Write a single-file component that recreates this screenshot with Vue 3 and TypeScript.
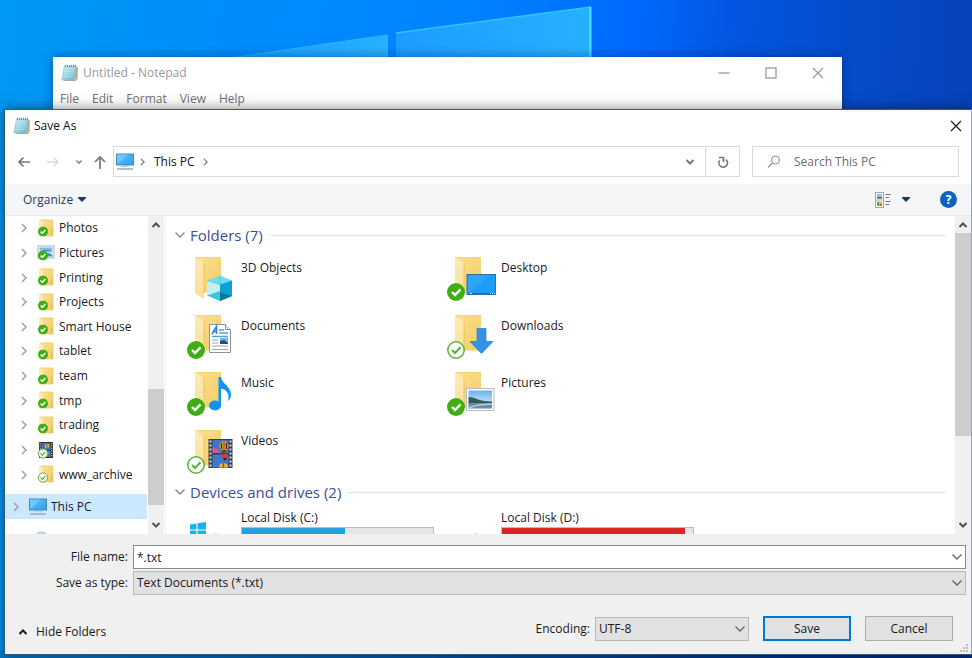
<script setup lang="ts">
import { ref } from 'vue'

interface TreeItem {
  name: string
  icon: string
}

interface Folder {
  name: string
  overlay: string
  badge: string
}

interface Drive {
  name: string
  used: number
  full: boolean
  system: boolean
}

const menus: string[] = ['File', 'Edit', 'Format', 'View', 'Help']

const tree: TreeItem[] = [
  { name: 'Photos', icon: 's-folder' },
  { name: 'Pictures', icon: 's-pictures' },
  { name: 'Printing', icon: 's-folder' },
  { name: 'Projects', icon: 's-folder' },
  { name: 'Smart House', icon: 's-folder' },
  { name: 'tablet', icon: 's-folder' },
  { name: 'team', icon: 's-folder' },
  { name: 'tmp', icon: 's-folder' },
  { name: 'trading', icon: 's-folder' },
  { name: 'Videos', icon: 's-videos' },
  { name: 'www_archive', icon: 's-folder-open' },
]

const folders: Folder[] = [
  { name: '3D Objects', overlay: 'o-cube', badge: '' },
  { name: 'Desktop', overlay: 'o-desktop', badge: 'b-solid' },
  { name: 'Documents', overlay: 'o-document', badge: 'b-solid' },
  { name: 'Downloads', overlay: 'o-download', badge: 'b-ring' },
  { name: 'Music', overlay: 'o-music', badge: 'b-solid' },
  { name: 'Pictures', overlay: 'o-picture', badge: 'b-solid' },
  { name: 'Videos', overlay: 'o-video', badge: 'b-ring' },
]

const drives: Drive[] = [
  { name: 'Local Disk (C:)', used: 54, full: false, system: true },
  { name: 'Local Disk (D:)', used: 96, full: true, system: false },
]

const fileName = ref('*.txt')
const fileType = ref('Text Documents (*.txt)')
const encoding = ref('UTF-8')
const search = ref('')
</script>

<template>
  <div class="desktop">
    <svg class="symbols" aria-hidden="true">
      <defs>
        <linearGradient id="g-folder" x1="0" y1="0" x2="1" y2="1">
          <stop offset="0" stop-color="#ffe08a" />
          <stop offset="1" stop-color="#f0cd6c" />
        </linearGradient>
        <linearGradient id="g-flap" x1="0" y1="0" x2="0" y2="1">
          <stop offset="0" stop-color="#fdeab5" />
          <stop offset="1" stop-color="#fbdf93" />
        </linearGradient>
        <linearGradient id="g-screen" x1="0" y1="0" x2="1" y2="1">
          <stop offset="0" stop-color="#63c4ff" />
          <stop offset="1" stop-color="#2a9ff2" />
        </linearGradient>
        <linearGradient id="g-pad" x1="0" y1="0" x2="1" y2="1">
          <stop offset="0" stop-color="#d3eff5" />
          <stop offset="1" stop-color="#62b8cd" />
        </linearGradient>
        <linearGradient id="g-sky" x1="0" y1="0" x2="0" y2="1">
          <stop offset="0" stop-color="#6fb0ee" />
          <stop offset="1" stop-color="#e9f5fb" />
        </linearGradient>
      </defs>

      <symbol id="notepad" viewBox="0 0 17 18">
        <path d="M14 2 L16.500 3 V15 Q16 17 14 17 H3 L2 16 Z" fill="#d9cfae" />
        <path d="M14 15 L16 3.500 V15 L14 16.500 H4" fill="none" stroke="#9f957a" stroke-width=".8" />
        <path d="M3.500 2 H15 L13 16 H.8 Z" fill="url(#g-pad)" stroke="#8bb8c2" stroke-width=".6" />
        <path d="M4 5 H13.500 M3.500 7.500 H13 M3 10 H12.500 M2.500 12.500 H12" stroke="#f0fbfd" stroke-width=".5" opacity=".5" />
        <path d="M4.500 .8V3 M6.500 .8V3 M8.500 .8V3 M10.500 .8V3 M12.500 .8V3 M14.500 .8V3" stroke="#6d7f86" stroke-width=".8" />
      </symbol>

      <symbol id="pc" viewBox="0 0 18 17">
        <rect x=".5" y="1" width="17" height="11" fill="url(#g-screen)" stroke="#407ea8" stroke-width=".9" />
        <path d="M1 11.500 L12 1.500 H1 Z" fill="#8fd6ff" opacity=".45" />
        <path d="M8 12.500 H10 V14 H8 Z" fill="#a2aeb8" />
        <path d="M5 13.500 H13" stroke="#c2cbd2" stroke-width="1" />
        <path d="M1 16 H17" stroke="#9daab6" stroke-width="1.500" />
      </symbol>

      <symbol id="s-badge" viewBox="0 0 10 10">
        <circle cx="5" cy="5" r="5" fill="#3fae15" />
        <path d="M2.600 5.100 L4.400 6.800 L7.400 3.500" fill="none" stroke="#fff" stroke-width="1.500" />
      </symbol>
      <symbol id="s-base" viewBox="0 0 18 19">
        <path d="M3 1 H16 V17 H3 Z" fill="url(#g-folder)" stroke="#edcd69" stroke-width=".8" />
        <path d="M13.500 11 L16 10 V17 H13.500 Z" fill="#e9c35c" />
        <path d="M3 1 L6 3 V17 H3 Z" fill="#fcebb2" />
      </symbol>
      <symbol id="s-folder" viewBox="0 0 18 19">
        <use href="#s-base" width="18" height="19" />
        <use href="#s-badge" x="1" y="7.500" width="10" height="10" />
      </symbol>
      <symbol id="s-folder-open" viewBox="0 0 18 19">
        <use href="#s-base" width="18" height="19" />
        <circle cx="6" cy="12.500" r="4.600" fill="#fff" stroke="#5cb53b" stroke-width="1" />
        <path d="M3.500 12.500 L5.500 14.400 L8.500 10.800" fill="none" stroke="#5cb53b" stroke-width="1.300" />
      </symbol>
      <symbol id="s-pictures" viewBox="0 0 18 19">
        <rect x="1" y="3" width="16" height="12" fill="#fff" stroke="#aab3bb" />
        <rect x="2.500" y="4.500" width="13" height="9" fill="url(#g-sky)" />
        <path d="M6 7.500 H14" stroke="#3a87dd" stroke-width="1.300" />
        <path d="M7 13.500 V11 L11 10 L15.500 12 V13.500 Z" fill="#5587a4" />
        <use href="#s-badge" x="1" y="7.500" width="10" height="10" />
      </symbol>
      <symbol id="s-videos" viewBox="0 0 18 19">
        <rect x="2" y="1" width="14" height="16" fill="#30343a" />
        <rect x="4.500" y="2" width="9" height="7" fill="#406ebc" />
        <rect x="4.500" y="9.800" width="9" height="6.200" fill="#4d86cf" />
        <circle cx="10" cy="5" r="2.300" fill="#e3b62f" />
        <path d="M10 3V8" stroke="#b04324" />
        <path d="M10 11 L13 16 H8 Z" fill="#73652f" />
        <path d="M3.200 2V16 M14.800 2V16" stroke="#d7dce2" stroke-width="1" stroke-dasharray="1.200 1.200" />
        <circle cx="6" cy="12.500" r="4.600" fill="#fff" stroke="#5cb53b" stroke-width="1" />
        <path d="M3.500 12.500 L5.500 14.400 L8.500 10.800" fill="none" stroke="#5cb53b" stroke-width="1.300" />
      </symbol>

      <symbol id="folder" viewBox="0 0 50 46">
        <path d="M8 1 H34 V36.500 H8 Z" fill="url(#g-folder)" />
        <path d="M8 1 H34 V2 H9 Z" fill="#f4d478" />
        <path d="M8 1.500 L17 7 V43 L8 37.500 Z" fill="url(#g-flap)" />
        <path d="M17 7 V37" stroke="#e5bd5c" stroke-width=".8" />
      </symbol>
      <symbol id="b-solid" viewBox="0 0 50 46">
        <circle cx="9" cy="36" r="9" fill="#3fae15" />
        <path d="M5 36 L8 39 L13.500 33.300" fill="none" stroke="#fff" stroke-width="2.400" />
      </symbol>
      <symbol id="b-ring" viewBox="0 0 50 46">
        <circle cx="9" cy="36" r="8.200" fill="#fff" stroke="#58b336" stroke-width="1.500" />
        <path d="M5 36 L8 39 L13.500 33.300" fill="none" stroke="#58b336" stroke-width="2" />
      </symbol>
      <symbol id="o-cube" viewBox="0 0 50 46">
        <path d="M20 24.500 L33 19.500 L45 24.500 L33 28.500 Z" fill="#6fdfee" />
        <path d="M20 24.500 L33 28.500 V45 L20 39.500 Z" fill="#c4f0f5" />
        <path d="M33 28.500 L45 24.500 V40 L33 45 Z" fill="#109fd4" />
        <path d="M20 39.500 L33 35 V45 Z" fill="#3cc7d9" />
        <path d="M33 36.500 L45 40 L33 45 Z" fill="#077a96" />
        <path d="M33 20V28 M33 28.500 L20 24.500 M33 28.500 L45 24.500" stroke="#30bfdc" stroke-width=".6" />
      </symbol>
      <symbol id="o-desktop" viewBox="0 0 50 46">
        <rect x="20" y="18.500" width="28.500" height="20" fill="#1e9cf7" stroke="#2b709f" />
        <path d="M21 38 L43 19 H21 Z" fill="#43b0ff" opacity=".45" />
        <path d="M21 37.500 H48" stroke="#126fc0" />
        <path d="M23 37.500 H25 M43 37.500 H44 M45 37.500 H46 M47 37.500 H48" stroke="#c8e7ff" />
      </symbol>
      <symbol id="o-document" viewBox="0 0 50 46">
        <path d="M22.500 10.500 H38.500 L43.500 15.500 V38.500 H22.500 Z" fill="#fcfdff" stroke="#8b949c" />
        <path d="M38.500 10.500 V15.500 H43.500" fill="#e3e8eb" stroke="#8b949c" />
        <path d="M25 20 L29.500 12.500 V20 M26.500 17.500 H29.500" fill="none" stroke="#2484d2" stroke-width="1.500" />
        <path d="M32 16 H37 M32 19 H41 M25 22.500 H41" stroke="#4ba3df" stroke-width="1.300" />
        <path d="M25 26 H31 M25 29 H31 M25 32 H41 M25 35.500 H41" stroke="#9aa5ae" stroke-width="1.100" />
        <rect x="33" y="24" width="8" height="6" fill="#76b5ea" />
        <path d="M33 27 L37 26 L41 29 V30 H33 Z" fill="#24506d" />
      </symbol>
      <symbol id="o-download" viewBox="0 0 50 46">
        <path d="M30 14.500 H39 V27.500 H46 L34.500 39.500 L23 27.500 H30 Z" fill="#3393e6" stroke="#2480cf" stroke-width=".7" />
      </symbol>
      <symbol id="o-music" viewBox="0 0 50 46">
        <ellipse cx="28" cy="34.500" rx="6" ry="5" fill="#0f94f5" />
        <path d="M31.500 6 H34 C35 13 44 15 44 24 C44 27 42.500 29 41 30 C43 23 40 19 34 17.500 V35 H31.500 Z" fill="#0f94f5" />
      </symbol>
      <symbol id="o-picture" viewBox="0 0 50 46">
        <rect x="19.500" y="17.500" width="27.500" height="22" fill="#fff" stroke="#b5bbc1" />
        <rect x="21.500" y="19.500" width="23.500" height="18" fill="url(#g-sky)" />
        <path d="M21.500 26 C27 26 31 29 37 30 L45 30.500 V33 H21.500 Z" fill="#345d52" />
        <path d="M21.500 32 H45 V37.500 H21.500 Z" fill="#668cab" />
        <path d="M21.500 37.500 C27 33 36 34 45 33" fill="none" stroke="#b6cddd" stroke-width="1.500" />
      </symbol>
      <symbol id="o-video" viewBox="0 0 50 46">
        <rect x="21.500" y="10" width="24" height="29" fill="#3a3e44" />
        <rect x="25.500" y="11" width="16" height="13" fill="#4373cc" />
        <rect x="25.500" y="25.500" width="16" height="13" fill="#3f78d3" />
        <path d="M25.500 18 L30 20 L34 24 H25.500 Z" fill="#d25b8e" />
        <circle cx="37" cy="17" r="4.500" fill="#e9b526" />
        <path d="M34.500 14V20 M39.500 14V20" stroke="#353014" stroke-width="1.500" />
        <path d="M37 13V21" stroke="#d6431f" stroke-width="1.500" />
        <path d="M34.500 21 L36 24 H38 L39.500 21 Z" fill="#6d431c" />
        <circle cx="38" cy="27.500" r="3" fill="#cb3f34" />
        <path d="M36 29 L38 32 L40 29 Z" fill="#272326" />
        <path d="M32 38.500 A4.500 4.500 0 0 1 41 38.500 Z" fill="#ebbb2f" />
        <path d="M36.500 34V38.500" stroke="#a2441e" stroke-width="1.500" />
        <path d="M23.500 11.500V38.500 M43.500 11.500V38.500" stroke="#d5dae0" stroke-width="2" stroke-dasharray="2 2" />
      </symbol>
      <symbol id="down" viewBox="0 0 12 8">
        <path d="M1.500 1.500 L6 6 L10.500 1.500" fill="none" stroke="currentColor" stroke-width="1.400" />
      </symbol>
      <symbol id="down-bold" viewBox="0 0 10 8">
        <path d="M1.500 2 L5 5.500 L8.500 2" fill="none" stroke="currentColor" stroke-width="2" />
      </symbol>
      <symbol id="right" viewBox="0 0 6 10">
        <path d="M1 1 L5 5 L1 9" fill="none" stroke="currentColor" stroke-width="1.500" />
      </symbol>
      <symbol id="caret" viewBox="0 0 8 5">
        <path d="M0 0 H8 V1 L4 5 L0 1 Z" fill="currentColor" />
      </symbol>
      <symbol id="close" viewBox="0 0 12 12">
        <path d="M1 1 L11 11 M11 1 L1 11" stroke="currentColor" stroke-width="1.300" />
      </symbol>
    </svg>

    <svg class="wallpaper" viewBox="0 0 972 110" preserveAspectRatio="xMidYMin slice" aria-hidden="true">
      <defs>
        <linearGradient id="g-pane" x1="0" y1="0" x2="1" y2="0">
          <stop offset="0" stop-color="#1b9dff" />
          <stop offset="1" stop-color="#27b0ff" />
        </linearGradient>
      </defs>
      <path d="M230 58 L387 35 V60 H230 Z" fill="url(#g-pane)" />
      <path d="M230 58 L387 35" stroke="#2ab5ff" />
      <path d="M387 35 V60" stroke="#2ebcff" stroke-width="1.500" />
      <path d="M396 33 L591 7 V60 H396 Z" fill="url(#g-pane)" />
      <path d="M396 33 L591 7" stroke="#30c4ff" stroke-width="1.500" />
      <path d="M590.500 7 V60" stroke="#42e4ff" stroke-width="2" />
    </svg>

    <section class="notepad" aria-label="Untitled - Notepad">
      <header class="np-title">
        <svg class="app-icon"><use href="#notepad" /></svg>
        <span class="np-name">Untitled - Notepad</span>
        <div class="np-buttons">
          <button type="button" aria-label="Minimize">
            <svg class="i12" viewBox="0 0 12 12"><path d="M.5 6 H11.500" stroke="currentColor" stroke-width="1.300" /></svg>
          </button>
          <button type="button" aria-label="Maximize">
            <svg class="i12" viewBox="0 0 12 12"><rect x="1" y="1" width="10" height="10" fill="none" stroke="currentColor" stroke-width="1.300" /></svg>
          </button>
          <button type="button" aria-label="Close"><svg class="i12"><use href="#close" /></svg></button>
        </div>
      </header>
      <nav class="np-menu">
        <button v-for="m in menus" :key="m" type="button">{{ m }}</button>
      </nav>
    </section>

    <section class="dialog" role="dialog" aria-labelledby="dialog-title">
      <header class="title">
        <svg class="app-icon"><use href="#notepad" /></svg>
        <span id="dialog-title">Save As</span>
        <button class="close" type="button" aria-label="Close"><svg class="i12"><use href="#close" /></svg></button>
      </header>

      <div class="nav">
        <div class="history">
          <button type="button" aria-label="Back">
            <svg class="i14" viewBox="0 0 14 14"><path d="M13 7 H2 M6.500 2.500 L2 7 L6.500 11.500" fill="none" stroke="#777" stroke-width="1.700" /></svg>
          </button>
          <button type="button" aria-label="Forward">
            <svg class="i14" viewBox="0 0 14 14"><path d="M1 7 H12 M7.500 2.500 L12 7 L7.500 11.500" fill="none" stroke="#d9d9d9" stroke-width="1.500" /></svg>
          </button>
          <button type="button" aria-label="Recent locations"><svg class="recent"><use href="#down-bold" /></svg></button>
          <button type="button" aria-label="Up">
            <svg class="i14" viewBox="0 0 14 14"><path d="M7 14 V2 M2 7 L7 2 L12 7" fill="none" stroke="#777" stroke-width="1.700" /></svg>
          </button>
        </div>
        <div class="address">
          <svg class="pc"><use href="#pc" /></svg>
          <svg class="crumb"><use href="#right" /></svg>
          <a href="#this-pc">This PC</a>
          <svg class="crumb"><use href="#right" /></svg>
          <button class="drop" type="button" aria-label="Previous locations"><svg class="i10"><use href="#down-bold" /></svg></button>
          <button class="refresh" type="button" aria-label="Refresh">
            <svg class="i14" viewBox="0 0 14 14">
              <path d="M3.600 5.500 A4.300 4.300 0 1 0 10 4.600" fill="none" stroke="#777" stroke-width="1.700" />
              <path d="M3 2.500 H7.500 V7" fill="none" stroke="#777" stroke-width="1.700" />
            </svg>
          </button>
        </div>
        <label class="search">
          <svg class="i14" viewBox="0 0 14 14">
            <circle cx="8.500" cy="5" r="4" fill="none" stroke="#8c8c94" stroke-width="1" />
            <path d="M5.500 8 L1 12.500" stroke="#9b8f96" stroke-width="1.200" />
          </svg>
          <input v-model="search" type="text" placeholder="Search This PC" aria-label="Search This PC" />
        </label>
      </div>

      <div class="commands">
        <button class="organize" type="button">Organize <svg class="caret"><use href="#caret" /></svg></button>
        <button class="view" type="button" aria-label="Change your view">
          <svg class="view-icon" viewBox="0 0 16 16">
            <rect x=".5" y=".5" width="8" height="15" fill="#fff" stroke="#a5a5a5" />
            <path d="M.5 8 H8.500" stroke="#a5a5a5" />
            <rect x="2" y="2" width="5" height="4.500" fill="#8cc3f2" />
            <path d="M2 5 H7 V6.500 H2 Z" fill="#2b6d88" />
            <rect x="2" y="9.500" width="2.500" height="4.500" fill="#64a93a" />
            <rect x="4.500" y="9.500" width="2.500" height="2.500" fill="#e9b92f" />
            <rect x="4.500" y="12" width="2.500" height="2" fill="#dd5142" />
            <path d="M10.500 2.500 H15.500 M10.500 5.500 H14 M10.500 9.500 H15.500 M10.500 12.500 H14" stroke="#75777c" />
          </svg>
          <svg class="caret"><use href="#caret" /></svg>
        </button>
        <button class="help" type="button" aria-label="Help">?</button>
      </div>

      <div class="body">
        <nav class="tree" aria-label="Folder tree">
          <ul class="tree-list">
            <li v-for="item in tree" :key="item.name" class="node">
              <svg class="twist"><use href="#right" /></svg>
              <svg class="node-icon"><use :href="'#' + item.icon" /></svg>
              <span>{{ item.name }}</span>
            </li>
          </ul>
          <div class="node root">
            <svg class="twist"><use href="#right" /></svg>
            <svg class="pc"><use href="#pc" /></svg>
            <span>This PC</span>
          </div>
          <svg class="network" viewBox="0 0 18 18">
            <circle cx="11" cy="7.500" r="6" fill="#63a9c8" />
            <path d="M6 5 Q11 1 14 4 M11 1.500 V12 M7 3 Q8 5 12 7" fill="none" stroke="#cce9f2" stroke-width="1.200" />
          </svg>
        </nav>
        <div class="scroll">
          <svg class="i10 up"><use href="#down-bold" /></svg>
          <div class="track"><div class="thumb low"></div></div>
          <svg class="i10"><use href="#down-bold" /></svg>
        </div>

        <main class="files">
          <h2 class="group"><svg class="i12h"><use href="#down" /></svg>Folders (7)</h2>
          <div class="folders">
            <div v-for="f in folders" :key="f.name" class="tile">
              <svg class="tile-icon" viewBox="0 0 50 46">
                <use href="#folder" />
                <use :href="'#' + f.overlay" />
                <use v-if="f.badge" :href="'#' + f.badge" />
              </svg>
              <span>{{ f.name }}</span>
            </div>
          </div>
          <h2 class="group"><svg class="i12h"><use href="#down" /></svg>Devices and drives (2)</h2>
          <div class="drives">
            <div v-for="d in drives" :key="d.name" class="tile">
              <svg class="tile-icon" viewBox="0 0 50 46">
                <path
                  v-if="d.system"
                  d="M3 14.500 L9.500 13.500 V19.500 H3 Z M10.500 13.300 L19 12 V19.500 H10.500 Z M3 20.500 H9.500 V27 L3 26 Z M10.500 20.500 H19 V28.500 L10.500 27.300 Z"
                  fill="#17b5ec"
                />
                <path d="M26 24 L29 22.500 L31 24 Z" fill="#d9dde1" />
              </svg>
              <div class="drive-info">
                <span>{{ d.name }}</span>
                <div class="usage" :class="{ full: d.full }"><div class="used" :style="{ width: d.used + '%' }"></div></div>
              </div>
            </div>
          </div>
        </main>
        <div class="scroll">
          <svg class="i10 up"><use href="#down-bold" /></svg>
          <div class="track"><div class="thumb high"></div></div>
          <svg class="i10"><use href="#down-bold" /></svg>
        </div>
      </div>

      <form class="footer" @submit.prevent>
        <div class="fields">
          <label for="file-name">File name:</label>
          <div class="field">
            <input id="file-name" v-model="fileName" type="text" />
            <svg class="field-arrow"><use href="#down" /></svg>
          </div>
          <label for="file-type">Save as type:</label>
          <div class="field gray">
            <select id="file-type" v-model="fileType">
              <option>Text Documents (*.txt)</option>
            </select>
            <svg class="field-arrow"><use href="#down" /></svg>
          </div>
        </div>
        <div class="actions">
          <button class="hide" type="button"><svg class="i10 up"><use href="#down-bold" /></svg>Hide Folders</button>
          <label for="encoding">Encoding:</label>
          <div class="field gray encoding">
            <select id="encoding" v-model="encoding">
              <option>UTF-8</option>
            </select>
            <svg class="field-arrow"><use href="#down" /></svg>
          </div>
          <button class="push primary" type="submit">Save</button>
          <button class="push" type="button">Cancel</button>
        </div>
        <svg class="grip" viewBox="0 0 9 9" aria-hidden="true">
          <path d="M6 0h2v2h-2z M3 3h2v2h-2z M6 3h2v2h-2z M0 6h2v2h-2z M3 6h2v2h-2z M6 6h2v2h-2z" fill="#bdbdbd" />
        </svg>
      </form>
    </section>
  </div>
</template>

<style>
body {
  margin: 0;
}
</style>

<style scoped>
.desktop {
  position: relative;
  height: 100vh;
  overflow: hidden;
  background:
    linear-gradient(90deg, #0078c8 0%, #005cad 40%, #003a94 70%, #002c80 100%) bottom / 100% 8px no-repeat,
    linear-gradient(95deg, #0099f4 0%, #008cfb 25%, #0083ff 46%, #0068ff 62%, #0355de 72%, #0649c6 86%, #053fb4 100%);
  font: 12px/16px "Open Sans", "Noto Sans", sans-serif;
  color: #1a1a1a;
}
.desktop *,
.desktop *::before {
  box-sizing: border-box;
}
svg {
  display: block;
  flex: none;
}
.symbols {
  position: absolute;
  width: 0;
  height: 0;
}
.wallpaper {
  position: absolute;
  top: 0;
  left: 0;
  width: 100%;
  height: 110px;
}
button {
  padding: 0;
  border: 0;
  background: none;
  font: inherit;
  color: inherit;
}
input,
select {
  min-width: 0;
  border: 0;
  outline: 0;
  margin: 0;
  background: none;
  font: inherit;
  color: inherit;
}
.i10 { width: 10px; height: 8px; }
.i12 { width: 12px; height: 12px; }
.i12h { width: 12px; height: 8px; color: #888; }
.i14 { width: 14px; height: 14px; }
.up { transform: scaleY(-1); }
.app-icon { width: 17px; height: 18px; }
.pc { width: 18px; height: 17px; }

.notepad {
  position: absolute;
  top: 57px;
  left: 53px;
  right: 130px;
  height: 90px;
  background: #fff;
  box-shadow: 0 0 10px rgba(0, 20, 60, 0.45);
}
.np-title {
  display: flex;
  align-items: center;
  gap: 5px;
  height: 32px;
  padding: 0 8px;
  color: #999;
}
.np-buttons {
  display: flex;
  gap: 35px;
  margin-left: auto;
  padding-right: 10px;
}
.np-menu {
  display: flex;
  gap: 13px;
  padding: 2px 7px;
  color: #707070;
}

.dialog {
  position: absolute;
  top: 109px;
  left: 4px;
  right: 0;
  bottom: 3px;
  display: flex;
  flex-direction: column;
  background: #fff;
  border: 1px solid #2d5a80;
  border-top-color: #555;
  border-right-color: #8fa3c4;
  box-shadow: 0 0 12px rgba(0, 0, 0, 0.5);
}
.title {
  display: flex;
  align-items: center;
  gap: 4px;
  height: 31px;
  padding: 0 9px 0 8px;
  color: #111;
}
.close {
  margin-left: auto;
  color: #222;
}
.nav {
  display: flex;
  align-items: center;
  height: 43px;
  padding: 0 12px 2px;
}
.history {
  display: flex;
  align-items: center;
  gap: 15px;
  width: 96px;
  color: #888;
}
.history .recent {
  width: 8px;
  height: 6px;
}
.history button:nth-child(4) {
  margin-left: -5px;
}
.address {
  display: flex;
  flex: 1;
  align-items: center;
  height: 31px;
  padding-left: 2px;
  border: 1px solid #d9d9d9;
}
.address a {
  color: #111;
  text-decoration: none;
}
.crumb {
  width: 5px;
  height: 8px;
  margin: 0 9px 0 6px;
  color: #777;
}
.address a + .crumb {
  margin-left: 8px;
}
.drop {
  margin-left: auto;
  padding: 0 10px;
  color: #777;
}
.refresh {
  display: grid;
  place-items: center;
  width: 34px;
  height: 100%;
  border-left: 1px solid #d9d9d9;
}
.search {
  display: flex;
  align-items: center;
  gap: 13px;
  width: 207px;
  height: 31px;
  margin-left: 12px;
  padding-left: 14px;
  border: 1px solid #d9d9d9;
}
.search input {
  flex: 1;
  padding: 0;
}
.search input::placeholder {
  color: #6d6d6d;
  opacity: 1;
}

.commands {
  display: flex;
  align-items: center;
  height: 32px;
  padding: 0 14px 0 18px;
  background: #f5f6f7;
  border-bottom: 1px solid #e8eaec;
  color: #1e395b;
}
.caret { width: 8px; height: 5px; }
.organize,
.view {
  display: flex;
  align-items: center;
  gap: 5px;
}
.view {
  gap: 11px;
  margin-left: auto;
}
.view-icon { width: 16px; height: 16px; }
.help {
  width: 17px;
  height: 17px;
  margin-left: 30px;
  border-radius: 50%;
  background: #0a63bd;
  color: #fff;
  font-weight: 700;
}

.body {
  display: flex;
  flex: 1;
  min-height: 0;
  overflow: hidden;
}
.tree {
  width: 143px;
  height: 100%;
  overflow: hidden;
}
.tree-list {
  display: grid;
  grid-auto-rows: 1fr;
  height: 271px;
  margin: 0 0 7px;
  padding: 0;
  list-style: none;
}
.node {
  display: flex;
  align-items: center;
  padding-left: 16px;
}
.node-icon { width: 18px; height: 19px; margin-right: 4px; }
.twist { width: 6px; height: 10px; margin-right: 10px; color: #a0a0a0; }
.node span { white-space: nowrap; }
.root {
  height: 25px;
  width: 142px;
  padding-left: 8px;
  background: #cce8ff;
}
.root .pc { margin-right: 4px; }
.network {
  width: 18px;
  height: 18px;
  margin: 11px 0 0 25px;
}
.scroll {
  display: flex;
  flex-direction: column;
  align-items: center;
  width: 16px;
  padding: 5px 0;
  background: #f0f0f0;
  color: #505050;
}
.track {
  display: flex;
  flex: 1;
  flex-direction: column;
  align-self: stretch;
  margin: 4px 0;
}
.thumb { background: #cdcdcd; }
.low { height: 116px; margin: auto 0 12px; }
.high { height: 203px; }

.files {
  flex: 1;
  min-width: 0;
  height: 100%;
  margin-left: 1px;
  padding-left: 8px;
  border-left: 1px solid #f0f0f0;
  overflow: hidden;
}
.group {
  display: flex;
  align-items: center;
  gap: 4px;
  height: 18px;
  margin: 10px 9px 0 0;
  font-size: 15px;
  font-weight: 400;
  line-height: 18px;
  color: #3b4e9e;
}
.group::after {
  content: "";
  flex: 1;
  height: 1px;
  margin-left: 3px;
  background: #e2e2e2;
}
.folders,
.drives {
  display: grid;
  grid-template-columns: 260px 260px;
  grid-auto-rows: 1fr;
  padding-left: 13px;
}
.folders {
  height: 230px;
  margin: 12px 0 -13px;
}
.tile {
  display: flex;
  align-items: flex-start;
  gap: 4px;
}
.tile-icon { width: 50px; height: 46px; }
.folders .tile span { padding-top: 4px; }
.drives { padding-top: 9px; }
.drive-info { width: 193px; }
.drive-info span { display: block; }
.usage {
  height: 15px;
  margin-top: 1px;
  border: 1px solid #bcbcbc;
  background: #e6e6e6;
}
.used {
  height: 100%;
  background: #26a0da;
}
.full .used { background: #da2626; }

.footer {
  position: relative;
  height: 120px;
  padding: 11px 5px 0;
  background: #f0f0f0;
}
.fields {
  display: grid;
  grid-template-columns: 118px 1fr;
  grid-auto-rows: 24px;
  gap: 2px 5px;
  align-items: center;
}
.fields label {
  text-align: right;
}
.field {
  display: flex;
  align-items: center;
  height: 24px;
  border: 1px solid #8a8a8a;
  background: #fff;
}
.field input,
.field select {
  flex: 1;
  width: 100%;
  height: 100%;
  padding: 0 20px 0 3px;
  appearance: none;
}
.field.gray {
  background: #e1e1e1;
  border-color: #b9b9b9;
}
.field-arrow {
  width: 12px;
  height: 8px;
  margin: 0 2px 0 -14px;
  color: #666;
  pointer-events: none;
}
.actions {
  display: flex;
  align-items: center;
  height: 25px;
  margin: 21px 13px 0 8px;
}
.hide {
  display: flex;
  align-items: center;
  gap: 8px;
  margin-right: auto;
  padding-top: 6px;
}
.encoding {
  width: 154px;
  margin: 0 14px 0 5px;
}
.push {
  width: 88px;
  height: 25px;
  border: 1px solid #adadad;
  background: #e1e1e1;
}
.primary {
  margin-right: 14px;
  border: 2px solid #0078d7;
}
.grip {
  position: absolute;
  right: 2px;
  bottom: 1px;
  width: 9px;
  height: 9px;
}
</style>
